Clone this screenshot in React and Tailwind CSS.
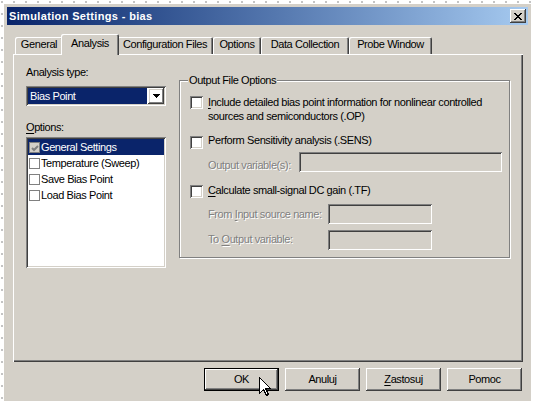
import React from "react";

// classic 3D borders
const raised =
    "shadow-[inset_-1px_-1px_#404040,inset_1px_1px_#ffffff,inset_-2px_-2px_#808080,inset_2px_2px_#d4d0c8]";
const sunken =
    "shadow-[inset_1px_1px_#808080,inset_-1px_-1px_#ffffff,inset_2px_2px_#404040,inset_-2px_-2px_#d4d0c8]";
const disabledText = "text-[#808080] [text-shadow:1px_1px_0_#ffffff]";

const tabs = [
    ["General", 48],
    ["Analysis", 54],
    ["Configuration Files", 96],
    ["Options", 48],
    ["Data Collection", 88],
    ["Probe Window", 83],
];

const Check = () => (
    <span className={`block w-[13px] h-[13px] shrink-0 bg-white ${sunken}`} />
);

const Field = ({ w }) => (
    <div className={`h-[20px] shrink-0 bg-[#d4d0c8] ${sunken}`} style={{ width: w }} />
);

const U = ({ children }) => <span className="underline underline-offset-[2px]">{children}</span>;

const Button = ({ children, def }) => (
    <div
        className={`relative w-[75px] h-[23px] ${def ? "border border-black" : ""}`}
    >
        <div className={`w-full h-full flex items-center justify-center ${raised}`}>
            {children}
        </div>
        {def && (
            <svg
                className="absolute left-[54px] top-[8px]"
                width="13"
                height="20"
                viewBox="0 0 13 20"
            >
                <path
                    d="M0.5 0.5 L0.5 16.5 L4.5 12.5 L7.5 18.5 L9.5 17.5 L6.5 11.5 L11.5 11.5 Z"
                    fill="#ffffff"
                    stroke="#000000"
                    strokeWidth="1"
                    shapeRendering="crispEdges"
                />
            </svg>
        )}
    </div>
);

const ListItem = ({ label, selected, grayed }) => (
    <div
        className={`h-[16px] flex items-center gap-[1px] pl-[1px] ${
            selected ? "bg-[#0a246a] text-white" : "text-black"
        }`}
    >
        <span
            className={`relative block w-[11px] h-[11px] shrink-0 border border-[#808080] ${
                grayed ? "bg-[#d4d0c8]" : "bg-white"
            }`}
        >
            {grayed && (
                <svg className="absolute left-[1px] top-[1px]" width="9" height="9" viewBox="0 0 9 9">
                    <path d="M1 4 L3 6 L7 2" fill="none" stroke="#808080" strokeWidth="2" />
                </svg>
            )}
        </span>
        <span>{label}</span>
    </div>
);

export default function App() {
    return (
        <div className="w-[537px] h-[407px] overflow-hidden bg-white bg-[radial-gradient(circle,#c4c4c4_0.8px,transparent_1px)] bg-[size:12px_12px] bg-[position:-4px_-4px] pt-[4px] pl-[4px] font-['Liberation_Sans',Arial,sans-serif] text-[11px] leading-[13px] tracking-[-0.4px] text-black">
            <div
                className={`w-[527px] h-[397px] bg-[#d4d0c8] p-[3px] flex flex-col ${raised.replace(
                    "inset_2px_2px_#d4d0c8",
                    "inset_2px_2px_#ffffff"
                )}`}
            >
                {/* title bar */}
                <div className="h-[18px] shrink-0 flex items-center justify-between bg-linear-to-r from-[#0a246a] to-[#a6caf0]">
                    <span className="pl-[2px] text-white font-bold tracking-[0.35px]">
                        Simulation Settings - bias
                    </span>
                    <div className={`mr-[2px] w-[16px] h-[14px] bg-[#d4d0c8] flex items-center justify-center ${raised}`}>
                        <svg width="8" height="7" viewBox="0 0 8 7" shapeRendering="crispEdges">
                            <path d="M0 0h2v1h-2zM6 0h2v1h-2zM1 1h2v1h-2zM5 1h2v1h-2zM2 2h4v1h-4zM3 3h2v1h-2zM2 4h4v1h-4zM1 5h2v1h-2zM5 5h2v1h-2zM0 6h2v1h-2zM6 6h2v1h-2z" fill="#000" />
                        </svg>
                    </div>
                </div>

                {/* body */}
                <div className="pl-[6px] pt-[9px] flex flex-col">
                    {/* tabs */}
                    <div className="h-[20px] flex items-end pl-[2px]">
                        {tabs.map(([name, w]) =>
                            name === "Analysis" ? (
                                <div
                                    key={name}
                                    className="relative z-10 -mx-[2px] -mb-[1px] h-[21px] bg-[#d4d0c8] rounded-t-[2px] flex justify-center pt-[3px] shadow-[inset_1px_1px_#ffffff,inset_-1px_0_#404040,inset_-2px_0_#808080]"
                                    style={{ width: w + 4 }}
                                >
                                    {name}
                                </div>
                            ) : (
                                <div
                                    key={name}
                                    className="h-[17px] bg-[#d4d0c8] rounded-t-[2px] flex justify-center pt-[1px] shadow-[inset_1px_1px_#ffffff,inset_-1px_0_#404040,inset_-2px_0_#808080]"
                                    style={{ width: w }}
                                >
                                    {name}
                                </div>
                            )
                        )}
                    </div>

                    {/* panel */}
                    <div className="w-[510px] h-[308px] flex pl-[13px] pt-[12px] shadow-[inset_1px_1px_#ffffff,inset_-1px_-1px_#404040,inset_-2px_-2px_#808080]">
                        {/* left column */}
                        <div className="w-[140px] flex flex-col">
                            <div className="h-[13px]">Analysis type:</div>
                            <div className={`mt-[7px] h-[20px] bg-white p-[2px] flex ${sunken}`}>
                                <div className="w-[119px] h-[16px] bg-[#0a246a] text-white flex items-center pl-[2px]">
                                    Bias Point
                                </div>
                                <div className={`ml-auto w-[16px] h-[16px] flex items-center justify-center ${raised}`}>
                                    <svg width="7" height="4" viewBox="0 0 7 4" shapeRendering="crispEdges">
                                        <path d="M0 0h7v1h-7zM1 1h5v1h-5zM2 2h3v1h-3zM3 3h1v1h-1z" fill="#000" />
                                    </svg>
                                </div>
                            </div>
                            <div className="mt-[15px] h-[13px]">
                                <U>O</U>ptions:
                            </div>
                            <div className={`mt-[3px] h-[131px] bg-white p-[2px] ${sunken}`}>
                                <ListItem label="General Settings" selected grayed />
                                <ListItem label="Temperature (Sweep)" />
                                <ListItem label="Save Bias Point" />
                                <ListItem label="Load Bias Point" />
                            </div>
                        </div>

                        {/* group box */}
                        <div className="ml-[13px] mt-[14px] w-[331px] h-[178px] border border-[#808080] shadow-[1px_1px_0_#ffffff,inset_1px_1px_0_#ffffff] flex flex-col">
                            <div className="-mt-[7px] ml-[8px] px-[1px] w-fit h-[13px] bg-[#d4d0c8]">
                                Output File Options
                            </div>
                            <div className="mt-[8px] pl-[10px] flex gap-[5px]">
                                <div className="mt-[1px]">
                                    <Check />
                                </div>
                                <div className="leading-[14px]">
                                    <U>I</U>nclude detailed bias point information for nonlinear controlled
                                    <br />
                                    sources and semiconductors (.OP)
                                </div>
                            </div>
                            <div className="mt-[11px] pl-[10px] flex gap-[5px]">
                                <div className="mt-[2px]">
                                    <Check />
                                </div>
                                <div>Perform Sensitivity analysis (.SENS)</div>
                            </div>
                            <div className="mt-[3px] pl-[28px] flex">
                                <div className={`w-[91px] pt-[7px] ${disabledText}`}>Output variable(s):</div>
                                <Field w={203} />
                            </div>
                            <div className="mt-[12px] pl-[10px] flex gap-[5px]">
                                <div className="mt-[1px]">
                                    <Check />
                                </div>
                                <div>
                                    <U>C</U>alculate small-signal DC gain (.TF)
                                </div>
                            </div>
                            <div className="mt-[6px] pl-[28px] flex">
                                <div className={`w-[120px] pt-[4px] ${disabledText}`}>
                                    From <U>I</U>nput source name:
                                </div>
                                <Field w={104} />
                            </div>
                            <div className="mt-[6px] pl-[28px] flex">
                                <div className={`w-[120px] pt-[3px] ${disabledText}`}>
                                    To <U>O</U>utput variable:
                                </div>
                                <Field w={104} />
                            </div>
                        </div>
                    </div>

                    {/* buttons */}
                    <div className="w-[509px] mt-[6px] flex justify-end gap-[6px]">
                        <Button def>OK</Button>
                        <Button>Anuluj</Button>
                        <Button>
                            <span>
                                <U>Z</U>astosuj
                            </span>
                        </Button>
                        <Button>Pomoc</Button>
                    </div>
                </div>
            </div>
        </div>
    );
}
